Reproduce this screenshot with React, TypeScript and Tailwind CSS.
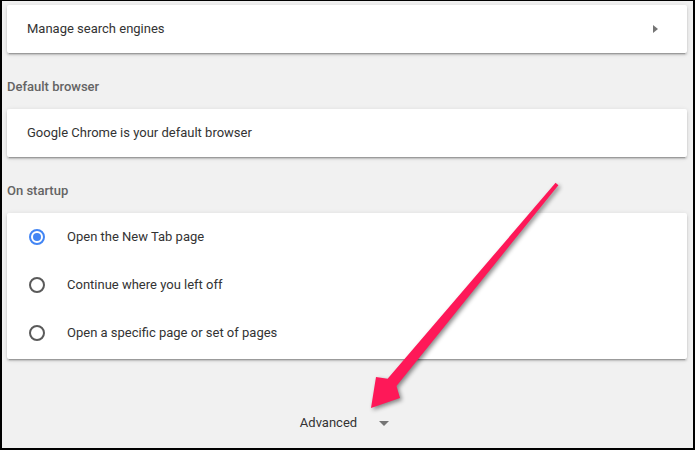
import React from "react";

const cardShadow =
  "shadow-[0_2px_2px_0_rgba(0,0,0,0.14),0_1px_5px_0_rgba(0,0,0,0.12),0_3px_1px_-2px_rgba(0,0,0,0.2)]";

function Radio({ checked }: { checked?: boolean }) {
  return (
    <span
      className={
        "flex items-center justify-center w-4 h-4 rounded-full border-2 " +
        (checked ? "border-[#4285f4]" : "border-[#5a5a5a]")
      }
    >
      {checked && <span className="w-2 h-2 rounded-full bg-[#4285f4]" />}
    </span>
  );
}

function Label({ children }: { children: React.ReactNode }) {
  return (
    <div className="pt-[24px] pb-[12px] h-[56px] leading-5 font-medium text-[#646464]">
      {children}
    </div>
  );
}

export default function App() {
  const rows = [
    { t: "Open the New Tab page", c: true },
    { t: "Continue where you left off", c: false },
    { t: "Open a specific page or set of pages", c: false },
  ];
  return (
    <div className="relative w-[695px] h-[450px] overflow-hidden border-black border-t border-l-2 border-r-2 border-b-2 bg-[#f1f1f1] font-['Roboto',sans-serif] text-[13px] text-[#333333]">
      <div className="pl-[5px] pr-[6px] pt-[4px]">
        <div
          className={
            "flex items-center justify-between h-12 bg-white rounded-[2px] pl-[20px] pr-[29px] " +
            cardShadow
          }
        >
          <span>Manage search engines</span>
          <svg width="5" height="8" viewBox="0 0 5 8">
            <path d="M0 0 L5 4 L0 8 Z" fill="#757575" />
          </svg>
        </div>

        <Label>Default browser</Label>
        <div
          className={
            "flex items-center h-12 bg-white rounded-[2px] pl-[20px] " + cardShadow
          }
        >
          <span>Google Chrome is your default browser</span>
        </div>

        <Label>On startup</Label>
        <div
          className={
            "flex flex-col pb-[2px] bg-white rounded-[2px] " + cardShadow
          }
        >
          {rows.map((r) => (
            <div key={r.t} className="flex items-center h-12 pl-[22px]">
              <Radio checked={r.c} />
              <span className="ml-[22px]">{r.t}</span>
            </div>
          ))}
        </div>

        <div className="flex items-center justify-center gap-[22px] mt-[54px] h-5 leading-5 pr-[5px]">
          <span>Advanced</span>
          <svg width="10" height="5" viewBox="0 0 10 5">
            <path d="M0 0 L10 0 L5 5 Z" fill="#757575" />
          </svg>
        </div>
      </div>

      <svg
        className="absolute left-[-2px] top-[-1px] pointer-events-none"
        width="695"
        height="450"
        viewBox="0 0 695 450"
        style={{ filter: "drop-shadow(2px 2px 2px rgba(0,0,0,0.45))" }}
      >
        <polygon
          points="555.6,182.8 387.6,378.8 376,377 371,408 400,398 396.5,386 558.4,185.2"
          fill="#fe1858"
        />
      </svg>
    </div>
  );
}
